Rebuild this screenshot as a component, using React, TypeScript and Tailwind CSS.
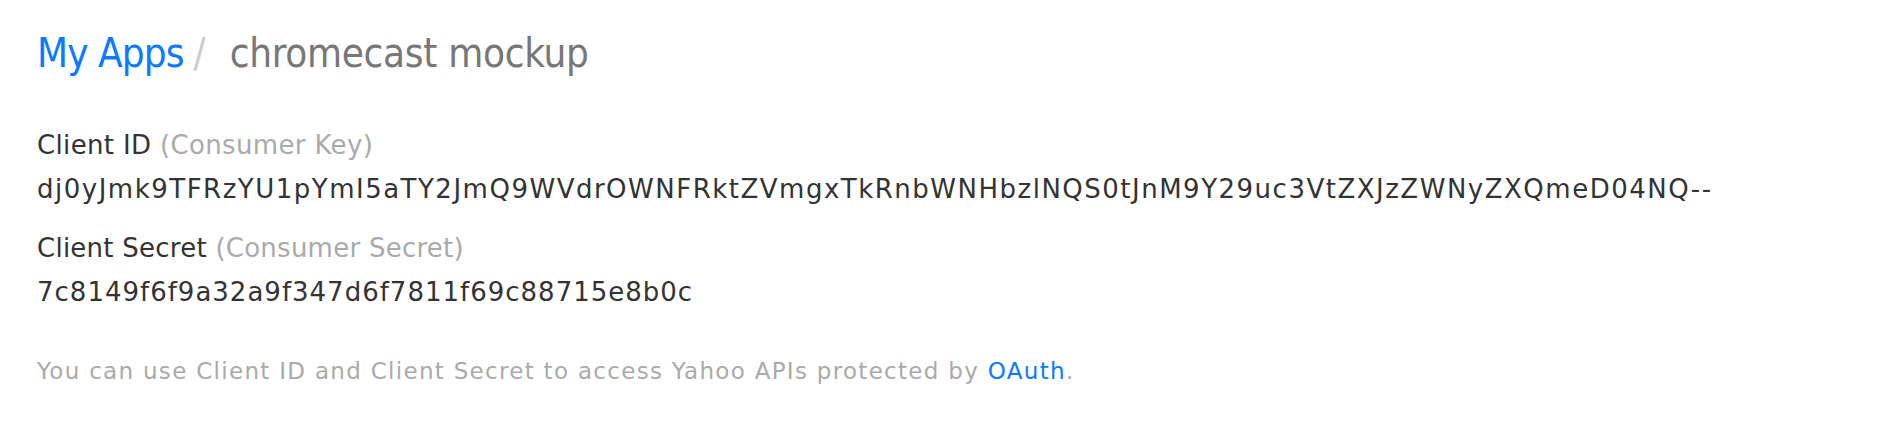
export default function App() {
  return (
    <div className="min-h-screen bg-white px-[37px] pt-[25px] font-['DejaVu_Sans',sans-serif]">
      {/* breadcrumb */}
      <h1 className="flex items-baseline font-['DejaVu_Sans_Condensed','DejaVu_Sans',sans-serif] text-[40px] leading-[56px]">
        <a href="#" className="tracking-[-0.9px] text-[#0a7bff]">My Apps</a>
        <span className="ml-[10px] mr-[24px] text-[#cccccc]">/</span>
        <span className="tracking-[-0.3px] text-[#777777]">chromecast mockup</span>
      </h1>

      {/* credentials */}
      <div className="mt-[46px] text-[26px] leading-[37px] text-[#333333]">
        <div className="tracking-[0.35px]">
          Client ID <span className="text-[#aaaaaa]">(Consumer Key)</span>
        </div>
        <div className="mt-[7px] tracking-[1.5px]">
          dj0yJmk9TFRzYU1pYmI5aTY2JmQ9WVdrOWNFRktZVmgxTkRnbWNHbzlNQS0tJnM9Y29uc3VtZXJzZWNyZXQmeD04NQ--
        </div>

        <div className="mt-[22px] tracking-[0.25px]">
          Client Secret <span className="text-[#aaaaaa]">(Consumer Secret)</span>
        </div>
        <div className="mt-[7px] tracking-[1px]">7c8149f6f9a32a9f347d6f7811f69c88715e8b0c</div>
      </div>

      <p className="mt-[44px] text-[23px] leading-[32px] tracking-[1.3px] text-[#aaaaaa]">
        You can use Client ID and Client Secret to access Yahoo APIs protected by{" "}
        <a href="#" className="text-[#0a7bff]">OAuth</a>.
      </p>
    </div>
  );
}
